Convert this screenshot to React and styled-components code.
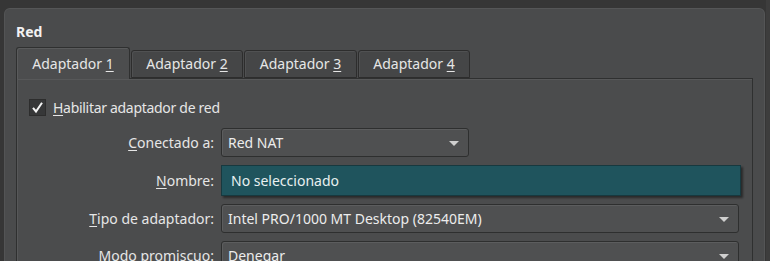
import React from "react";
import styled, { createGlobalStyle } from "styled-components";

const GlobalStyle = createGlobalStyle`
  html, body {
    margin: 0;
    padding: 0;
    background: #363636;
    font-family: "Noto Sans", "Open Sans", sans-serif;
    overflow: hidden;
  }
`;

const Page = styled.div`
  width: 770px;
  height: 261px;
  padding: 8px 0 0 4px;
  box-sizing: border-box;
  display: flex;
  background: linear-gradient(to right, #363636 0, #363636 766px, #3d3d3d 766px);
`;

const Window = styled.div`
  width: 761px;
  height: 260px;
  box-sizing: border-box;
  background: #4a4b4c;
  border-top-left-radius: 6px;
  border-top-right-radius: 6px;
  border-top: 1px solid #555657;
  border-left: 1px solid #535455;
  border-right: 1px solid #545556;
  padding: 13px 0 0 11px;
  display: flex;
  flex-direction: column;
`;

const Title = styled.div`
  font-size: 14px;
  font-weight: 700;
  color: #f2f2f2;
  height: 20px;
  line-height: 20px;
  margin-bottom: 5px;
`;

const TabBar = styled.div`
  display: flex;
  align-items: flex-end;
  height: 31px;
  gap: 1px;
  position: relative;
  z-index: 1;
`;

const Tab = styled.div`
  width: ${(p) => p.$width}px;
  height: ${(p) => (p.$active ? 32 : 28)}px;
  box-sizing: border-box;
  border: 1px solid ${(p) => (p.$active ? "#2f3030" : "#2d2d2d")};
  border-bottom: ${(p) => (p.$active ? "none" : "1px solid #2d2d2d")};
  border-radius: 3px 3px 0 0;
  background: ${(p) => (p.$active ? "#4c4d4e" : "#454647")};
  box-shadow: inset 1px 1px 0 ${(p) => (p.$active ? "#5a5b5c" : "#505152")};
  color: #e6e6e6;
  font-size: 14px;
  display: flex;
  justify-content: center;
  padding-top: ${(p) => (p.$active ? 6 : 3)}px;
  margin-bottom: ${(p) => (p.$active ? -1 : 0)}px;
`;

const Key = styled.span`
  text-decoration: underline;
  text-underline-offset: 2px;
`;

const Panel = styled.div`
  width: 737px;
  flex: 1;
  box-sizing: border-box;
  border: 1px solid #2f3030;
  border-bottom: none;
  background: #4b4c4d;
  box-shadow: inset 1px 1px 0 #575859;
  padding: 19px 12px 0 12px;
  display: flex;
  flex-direction: column;
`;

const CheckRow = styled.label`
  display: flex;
  align-items: center;
  gap: 7px;
  height: 18px;
  color: #e6e6e6;
  font-size: 14px;
  letter-spacing: -0.3px;
  margin-bottom: 12px;
`;

const CheckBox = styled.span`
  width: 17px;
  height: 17px;
  box-sizing: border-box;
  background: #363738;
  border: 1px solid #2d2d2d;
  display: flex;
  align-items: center;
  justify-content: center;
`;

const Form = styled.div`
  display: grid;
  grid-template-columns: 185px 518px;
  column-gap: 7px;
  row-gap: 8px;
  align-items: center;
`;

const Label = styled.div`
  text-align: right;
  color: #e6e6e6;
  font-size: 14px;
`;

const Combo = styled.div`
  width: ${(p) => p.$width || 518}px;
  height: 29px;
  box-sizing: border-box;
  border: 1px solid #2e2f2f;
  border-radius: 3px;
  background: #4f5051;
  box-shadow: inset 1px 1px 0 #5c5d5e;
  color: #ececec;
  font-size: 14px;
  display: flex;
  align-items: center;
  justify-content: space-between;
  padding: 0 9px 0 6px;
`;

const Arrow = styled.span`
  width: 0;
  height: 0;
  border-left: 5px solid transparent;
  border-right: 5px solid transparent;
  border-top: 5px solid #cfcfcf;
  margin-top: 2px;
`;

const Field = styled.div`
  width: 520px;
  height: 31px;
  box-sizing: border-box;
  border: 1px solid #17393f;
  background: #1f545d;
  box-shadow: 2px 2px 2px rgba(0, 0, 0, 0.45);
  color: #e8f0f0;
  font-size: 14px;
  display: flex;
  align-items: center;
  padding-left: 9px;
`;

function Check() {
  return (
    <svg width="13" height="13" viewBox="0 0 13 13">
      <path d="M2 6.8 L5 10.5 L11 1.8" fill="none" stroke="#f4f4f4" strokeWidth="2" />
    </svg>
  );
}

const tabs = [
  { n: "1", w: 114, active: true },
  { n: "2", w: 112 },
  { n: "3", w: 113 },
  { n: "4", w: 112 },
];

export default function App() {
  return (
    <>
      <GlobalStyle />
      <Page>
        <Window>
          <Title>Red</Title>
          <TabBar>
            {tabs.map((t) => (
              <Tab key={t.n} $active={t.active} $width={t.w}>
                Adaptador&nbsp;<Key>{t.n}</Key>
              </Tab>
            ))}
          </TabBar>
          <Panel>
            <CheckRow>
              <CheckBox>
                <Check />
              </CheckBox>
              <span>
                <Key>H</Key>abilitar adaptador de red
              </span>
            </CheckRow>
            <Form>
              <Label>
                <Key>C</Key>onectado a:
              </Label>
              <Combo $width={248}>
                Red NAT
                <Arrow />
              </Combo>
              <Label>
                <Key>N</Key>ombre:
              </Label>
              <Field>No seleccionado</Field>
              <Label>
                <Key>T</Key>ipo de adaptador:
              </Label>
              <Combo>
                Intel PRO/1000 MT Desktop (82540EM)
                <Arrow />
              </Combo>
              <Label>
                <Key>M</Key>odo promiscuo:
              </Label>
              <Combo>
                Denegar
                <Arrow />
              </Combo>
            </Form>
          </Panel>
        </Window>
      </Page>
    </>
  );
}
